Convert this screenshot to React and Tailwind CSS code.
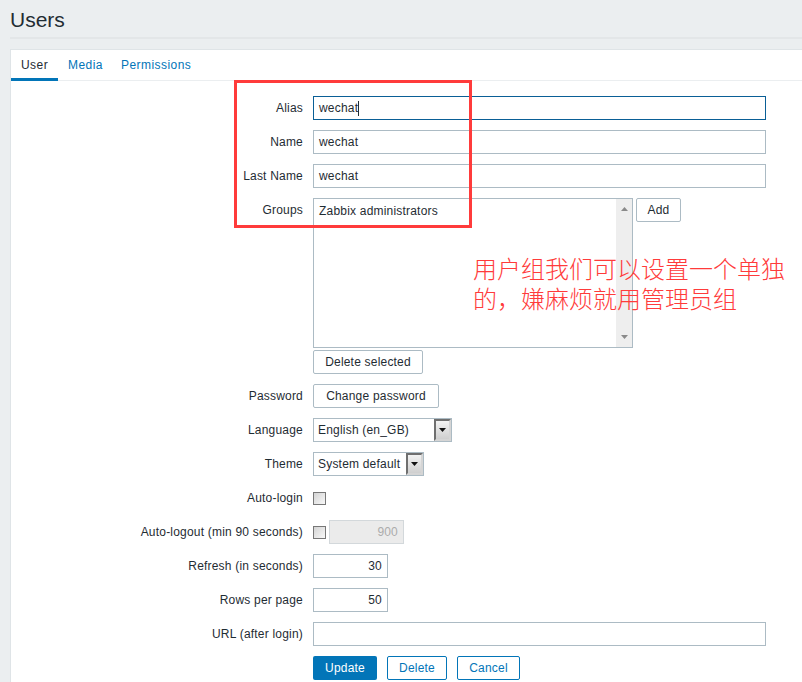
const labelClass = 'w-[292px] shrink-0 text-right text-[#1f2c33]';

function FormRow({ label, children, className = 'mb-[10px]' }) {
  return (
    <div className={`flex h-6 items-center gap-[10px] ${className}`}>
      <div className={labelClass}>{label}</div>
      {children}
    </div>
  );
}

function TextBox({ value = '', width = 'w-[453px]', border = 'border-[#acbbc4]', caret = false, right = false }) {
  return (
    <div className={`relative flex h-6 items-center border bg-white px-[5px] text-[#1f2c33] ${width} ${border} ${right ? 'justify-end' : ''}`}>
      {value}
      {caret && <span className="absolute left-[44px] top-[4px] h-[15px] w-px bg-[#1f2c33]" />}
    </div>
  );
}

function GrayButton({ children, width }) {
  return (
    <button className={`flex h-6 items-center justify-center rounded-[2px] border border-[#acbbc4] bg-white text-[#1f2c33] ${width}`}>
      {children}
    </button>
  );
}

function OutlineButton({ children, width }) {
  return (
    <button className={`flex h-6 items-center justify-center rounded-[2px] border border-[#0275b8] bg-white text-[#0275b8] ${width}`}>
      {children}
    </button>
  );
}

function Select({ value, width }) {
  return (
    <div className={`flex h-6 items-center justify-between border border-[#acbbc4] bg-white pl-1 ${width}`}>
      <span className="text-[#1f2c33]">{value}</span>
      <span className="flex h-[22px] w-[17px] items-center justify-center border-2 border-t-[#6f6f6f] border-l-[#6f6f6f] border-r-[#d5d5d5] border-b-[#d5d5d5] bg-gradient-to-b from-[#f2f2f2] to-[#cfcfcf]">
        <svg width="7" height="4" viewBox="0 0 7 4"><path d="M0 0h7L3.5 4z" fill="#111" /></svg>
      </span>
    </div>
  );
}

function Checkbox() {
  return <span className="block h-[13px] w-[13px] shrink-0 border border-[#777] bg-gradient-to-br from-[#d4d4d4] to-[#f8f8f8]" />;
}

export default function App() {
  return (
    <div className="relative h-[682px] w-[802px] overflow-hidden bg-[#ebeef0] pl-[10px] text-[12px] tracking-[0.2px] font-['Liberation_Sans',Arial,sans-serif]">
      <div className="h-[39px] border-b-2 border-[#e3e6e8]">
        <h1 className="pt-[7px] text-[21px] leading-[26px] tracking-normal text-[#1f2c33]">Users</h1>
      </div>
      <div className="mt-[10px] h-[640px] border border-r-0 border-[#dfe4e7] bg-white">
        <div className="flex h-[31px] items-start border-b border-[#ebeef0] leading-[29px] tracking-[0.45px]">
          <div className="h-[31px] w-[47px] border-b-[3px] border-[#0275b8] pl-[10px] pt-px text-[#1f2c33]">User</div>
          <div className="ml-[10px] pt-px text-[#0275b8]">Media</div>
          <div className="ml-[18px] pt-px text-[#0275b8]">Permissions</div>
        </div>
        <div className="pt-[15px]">
          <FormRow label="Alias"><TextBox value="wechat" border="border-[#0a5f96]" caret /></FormRow>
          <FormRow label="Name"><TextBox value="wechat" /></FormRow>
          <FormRow label="Last Name"><TextBox value="wechat" /></FormRow>
          <div className="flex items-start gap-[10px]">
            <div className={`${labelClass} leading-6`}>Groups</div>
            <div className="flex h-[150px] w-[320px] border border-[#acbbc4] bg-white pl-[5px]">
              <div className="flex-1 pt-[3px] text-[#1f2c33]">Zabbix administrators</div>
              <div className="flex w-[16px] flex-col items-center justify-between bg-[#eeeeee] py-[8px]">
                <svg width="7" height="4" viewBox="0 0 7 4"><path d="M3.5 0L7 4H0z" fill="#8a8a8a" /></svg>
                <svg width="7" height="4" viewBox="0 0 7 4"><path d="M0 0h7L3.5 4z" fill="#8a8a8a" /></svg>
              </div>
            </div>
            <div className="-ml-[7px]"><GrayButton width="w-[45px]">Add</GrayButton></div>
          </div>
          <div className="mb-[10px] mt-[2px] pl-[302px]"><GrayButton width="w-[110px]">Delete selected</GrayButton></div>
          <FormRow label="Password"><GrayButton width="w-[126px]">Change password</GrayButton></FormRow>
          <FormRow label="Language"><Select value="English (en_GB)" width="w-[139px]" /></FormRow>
          <FormRow label="Theme"><Select value="System default" width="w-[111px]" /></FormRow>
          <FormRow label="Auto-login"><Checkbox /></FormRow>
          <FormRow label="Auto-logout (min 90 seconds)">
            <div className="flex items-center gap-[3px]">
              <Checkbox />
              <div className="flex h-6 w-[75px] items-center justify-end border border-[#d3d8db] bg-[#ebebeb] px-[5px] text-[#acacac]">900</div>
            </div>
          </FormRow>
          <FormRow label="Refresh (in seconds)"><TextBox value="30" width="w-[75px]" right /></FormRow>
          <FormRow label="Rows per page"><TextBox value="50" width="w-[75px]" right /></FormRow>
          <FormRow label="URL (after login)"><TextBox /></FormRow>
          <div className="flex gap-[10px] pl-[302px]">
            <button className="flex h-6 w-[64px] items-center justify-center rounded-[2px] bg-[#0275b8] text-white">Update</button>
            <OutlineButton width="w-[60px]">Delete</OutlineButton>
            <OutlineButton width="w-[63px]">Cancel</OutlineButton>
          </div>
        </div>
      </div>

      {/* annotation drawn over the screenshot */}
      <div className="absolute left-[234px] top-[80px] h-[148px] w-[238px] border-[3px] border-[#ff3b3b]" />
      <div className="absolute left-[473px] top-[253px] w-[320px] font-['Noto_Sans_CJK_SC',sans-serif] text-[24px] leading-[30px] tracking-normal font-light text-[#ff3b3b]">
        <div>用户组我们可以设置一个单独</div>
        <div>的，嫌麻烦就用管理员组</div>
      </div>
    </div>
  );
}
